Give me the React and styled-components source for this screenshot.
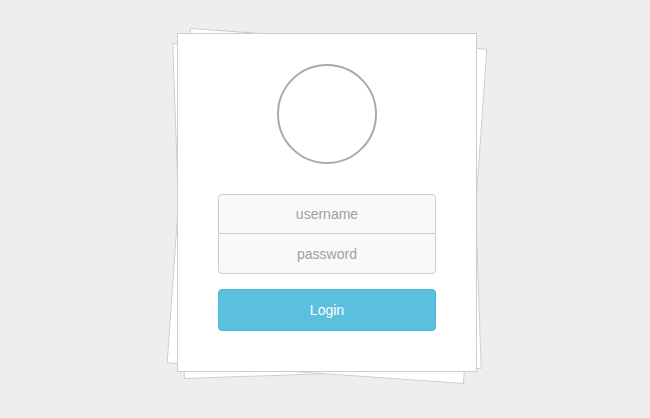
import React from 'react'
import styled, { createGlobalStyle } from 'styled-components'

const GlobalStyle = createGlobalStyle`
  html {
    background: #eeeeee;
  }

  body {
    margin: 0;
    padding: 0;
    font-family: "Liberation Sans", Arial, sans-serif;
  }
`

// own stacking context so the sheets sit above the page but under the card
const Page = styled.div`
  position: relative;
  z-index: 0;
  box-sizing: border-box;
  min-height: 100vh;
  display: flex;
  justify-content: center;
  align-items: flex-start;
  padding: 33px 0 0 4px;
`

// the card, with two loose sheets peeking out behind it
const Card = styled.div`
  position: relative;
  box-sizing: border-box;
  width: 300px;
  height: 339px;
  padding: 30px 40px;
  display: flex;
  flex-direction: column;
  align-items: center;
  background: #fff;
  border: 1px solid #cccccc;

  &::before,
  &::after {
    content: '';
    position: absolute;
    top: 4px;
    bottom: -3px;
    left: 0;
    right: 0;
    background: #fff;
    border: 1px solid #cccccc;
    z-index: -1;
  }

  &::before {
    transform: rotate(-2deg);
  }

  &::after {
    transform: rotate(4deg);
  }
`

const Avatar = styled.div`
  box-sizing: border-box;
  width: 100px;
  height: 100px;
  border: 2px solid #aaaaaa;
  border-radius: 50%;
  margin-bottom: 30px;
`

const Form = styled.form`
  width: 100%;
  display: flex;
  flex-direction: column;
  margin: 0;
`

const FieldGroup = styled.div`
  display: flex;
  flex-direction: column;
  border: 1px solid #cccccc;
  border-radius: 4px;
  background: #f9f9f9;
  overflow: hidden;
`

const Field = styled.input`
  box-sizing: border-box;
  width: 100%;
  height: ${props => props.$height}px;
  border: 0;
  border-top: ${props => (props.$divider ? '1px solid #cccccc' : '0')};
  margin: 0;
  padding: 0 10px;
  background: transparent;
  font-family: "Liberation Sans", Arial, sans-serif;
  font-size: 14px;
  color: #555;
  text-align: center;
  outline: none;

  &::placeholder {
    color: #a0a0a0;
    opacity: 1;
  }
`

const LoginButton = styled.button`
  box-sizing: border-box;
  width: 100%;
  height: 42px;
  margin-top: 15px;
  border: 1px solid #46b8da;
  border-radius: 4px;
  background: #5bc0de;
  color: #fff;
  font-family: "Liberation Sans", Arial, sans-serif;
  font-size: 14px;
  cursor: pointer;
`

export default function App () {
  return (
    <>
      <GlobalStyle />
      <Page>
        <Card>
          <Avatar />
          <Form onSubmit={e => e.preventDefault()}>
            <FieldGroup>
              <Field type='text' placeholder='username' $height={38} />
              <Field type='password' placeholder='password' $height={40} $divider />
            </FieldGroup>
            <LoginButton type='submit'>Login</LoginButton>
          </Form>
        </Card>
      </Page>
    </>
  )
}
